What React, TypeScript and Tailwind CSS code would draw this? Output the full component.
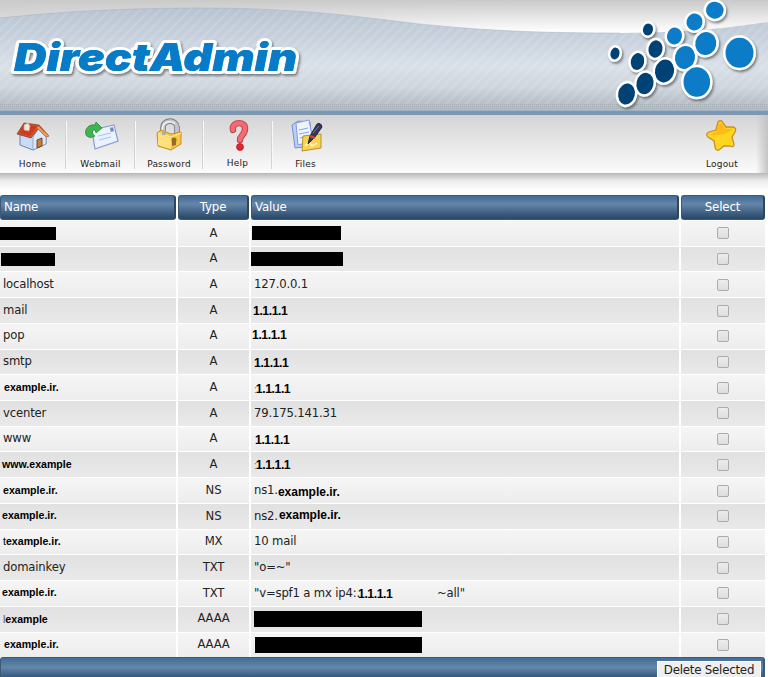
import React from "react";

type Row = {
  name: React.ReactNode;
  type: string;
  value: React.ReactNode;
};

const bold = "font-['Liberation_Sans'] font-bold text-black leading-none whitespace-pre";

function Bar({ className }: { className: string }) {
  return <span className={`block shrink-0 bg-black ${className}`} />;
}

function B({ children, className = "" }: { children: React.ReactNode; className?: string }) {
  return <span className={`${bold} ${className}`}>{children}</span>;
}

function Plain({ children, className = "" }: { children: React.ReactNode; className?: string }) {
  return <span className={`whitespace-pre tracking-[-0.17px] ${className}`}>{children}</span>;
}

const ex = "text-[10.6px] tracking-[0px]";
const ip = "text-[12.2px] tracking-[-0.4px]";

const rows: Row[] = [
  { name: <Bar className="mt-px h-[13px] w-[56px]" />, type: "A", value: <Bar className="ml-px h-[14px] w-[89px]" /> },
  { name: <Bar className="ml-px mt-px h-[13px] w-[54px]" />, type: "A", value: <Bar className="h-[14px] w-[92px]" /> },
  { name: <Plain className="pl-[3px]">localhost</Plain>, type: "A", value: <Plain className="pl-[3px]">127.0.0.1</Plain> },
  { name: <Plain className="pl-[3px]">mail</Plain>, type: "A", value: <B className={`${ip} pl-[2px] pt-px`}>1.1.1.1</B> },
  { name: <Plain className="pl-[3px]">pop</Plain>, type: "A", value: <B className={`${ip} pl-px pb-[2px]`}>1.1.1.1</B> },
  { name: <Plain className="pl-[3px]">smtp</Plain>, type: "A", value: <B className={`${ip} pl-[3px] pt-[3px]`}>1.1.1.1</B> },
  { name: <B className={`${ex} pl-[4px]`}>example.ir.</B>, type: "A", value: <B className={`${ip} pl-[3px] pt-[3px]`}><span className="text-[10px] font-normal text-[#777] tracking-[-1px]">:</span>1.1.1.1</B> },
  { name: <Plain className="pl-[3px]">vcenter</Plain>, type: "A", value: <Plain className="pl-[3px]">79.175.141.31</Plain> },
  { name: <Plain className="pl-[3px]">www</Plain>, type: "A", value: <B className={`${ip} pl-[4px] pt-px`}>1.1.1.1</B> },
  { name: <B className={`${ex} pl-[2px] tracking-[-0.15px] pb-px`}>www.example</B>, type: "A", value: <B className={`${ip} pl-[3px] pt-px`}><span className="text-[10px] font-normal text-[#777] tracking-[-1px]">:</span>1.1.1.1</B> },
  { name: <B className={`${ex} pl-[3px]`}>example.ir.</B>, type: "NS", value: <><Plain className="pl-[3px]">ns1.</Plain><B className="text-[12px] pt-[3px]">example.ir.</B></> },
  { name: <B className={`${ex} pl-[2px] pb-px`}>example.ir.</B>, type: "NS", value: <><Plain className="pl-[3px]">ns2.</Plain><B className="text-[12px] pl-px pb-[2px]">example.ir.</B></> },
  { name: <B className={`${ex} pl-[3px] pb-px`}><span className="font-normal">t</span>example.ir.</B>, type: "MX", value: <Plain className="pl-[3px]">10 mail</Plain> },
  { name: <Plain className="pl-[3px]">domainkey</Plain>, type: "TXT", value: <Plain className="pl-[3px]">"o=~"</Plain> },
  {
    name: <B className={`${ex} pl-[2px] pb-[3px]`}>example.ir.</B>,
    type: "TXT",
    value: (
      <>
        <Plain className="w-[107px] pl-[3px]">"v=spf1 a mx ip4:.</Plain>
        <B className={`${ip} w-[79px] pt-px`}>1.1.1.1</B>
        <Plain>~all"</Plain>
      </>
    ),
  },
  { name: <B className={`${ex} pl-[3px]`}><span className="font-normal text-[#555]">l</span>example</B>, type: "AAAA", value: <Bar className="ml-[3px] h-[16px] w-[168px]" /> },
  { name: <B className={`${ex} pl-[4px] pb-px`}>example.ir.</B>, type: "AAAA", value: <Bar className="ml-[4px] h-[16px] w-[167px]" /> },
];

function Banner() {
  const dots: [number, number, number, number, string][] = [
    [615, 53.5, 4.5, 6, "#054276"],
    [648, 29.5, 5, 6, "#054276"],
    [637.5, 61.5, 6.7, 8.5, "#054276"],
    [655.5, 49, 7, 8.7, "#054276"],
    [626.5, 94, 8.3, 10.7, "#054276"],
    [645, 83.5, 8.5, 10.8, "#054276"],
    [664.5, 71, 9.5, 11.5, "#054276"],
    [674.5, 36, 7.5, 8.5, "#087bc8"],
    [694.5, 22, 8, 8.5, "#087bc8"],
    [714.8, 10.2, 8.8, 8.5, "#087bc8"],
    [685, 57.5, 10, 11.5, "#087bc8"],
    [705.8, 43.5, 10.5, 11.5, "#087bc8"],
    [696.8, 82, 13.3, 14.8, "#087bc8"],
    [739.5, 52.8, 14, 15, "#087bc8"],
  ];
  return (
    <svg className="block h-[115px] w-[768px] shrink-0" viewBox="0 0 768 115">
      <defs>
        <linearGradient id="sky" x1="0" y1="0" x2="0" y2="1">
          <stop offset="0" stopColor="#cbcaca" />
          <stop offset="0.28" stopColor="#fff" />
        </linearGradient>
        <linearGradient id="skyLeft">
          <stop offset="0" stopColor="#cbcaca" stopOpacity="0.5" />
          <stop offset="1" stopColor="#cbcaca" stopOpacity="0" />
        </linearGradient>
        <linearGradient id="hill" gradientUnits="userSpaceOnUse" x1="0" y1="8" x2="0" y2="111">
          <stop offset="0" stopColor="#b6c3d1" />
          <stop offset="0.3" stopColor="#c8d2de" />
          <stop offset="0.57" stopColor="#d9e0e8" />
          <stop offset="0.78" stopColor="#cdd4dc" />
          <stop offset="0.9" stopColor="#bac1c9" />
          <stop offset="1" stopColor="#b5bcc3" />
        </linearGradient>
        <pattern id="stripe" width="10" height="10" patternUnits="userSpaceOnUse">
          <path d="M-2 12L12 -2M-2 2L2 -2M8 12L12 8" stroke="#fff" strokeWidth="2.6" opacity="0.11" />
        </pattern>
        <pattern id="mesh" width="2" height="2" patternUnits="userSpaceOnUse">
          <rect width="1" height="1" fill="#8f98a1" opacity="0.4" />
        </pattern>
        <filter id="shade" x="-20%" y="-20%" width="140%" height="150%">
          <feDropShadow dx="1.5" dy="2" stdDeviation="1.2" floodColor="#333" floodOpacity="0.55" />
        </filter>
      </defs>
      <rect width="768" height="115" fill="url(#sky)" />
      <rect width="500" height="40" fill="url(#skyLeft)" />
      <path d="M0 18C75 10 145 8 200 8C320 8 385 21 430 25C500 32 560 33 620 33C685 33 730 28 768 22V111H0Z" fill="url(#hill)" />
      <path d="M0 18C75 10 145 8 200 8C320 8 385 21 430 25C500 32 560 33 620 33C685 33 730 28 768 22V104H0Z" fill="url(#stripe)" />
      <path d="M0 18C75 10 145 8 200 8C320 8 385 21 430 25C500 32 560 33 620 33" fill="none" stroke="#a6b0bc" strokeOpacity=".5" />
      <rect y="104" width="768" height="6" fill="url(#mesh)" />
      <rect y="110" width="768" height="5" fill="#7c98b3" />
      <rect y="110" width="768" height="1" fill="#a0b2c3" />
      <text
        x="14" y="71" textLength="283" lengthAdjust="spacingAndGlyphs" filter="url(#shade)"
        fill="#087bc8" stroke="#fff" strokeWidth="6" strokeLinejoin="round" paintOrder="stroke"
        className="font-['Inter'] text-[39px] font-black italic"
      >DirectAdmin</text>
      <text
        x="14" y="71" textLength="283" lengthAdjust="spacingAndGlyphs" fill="#087bc8"
        className="font-['Inter'] text-[39px] font-black italic"
      >DirectAdmin</text>
      <g filter="url(#shade)" stroke="#fff" strokeWidth="5" paintOrder="stroke">
        {dots.map(([x, y, rx, ry, c]) => (
          <ellipse key={`${x}`} cx={x} cy={y} rx={rx} ry={ry} fill={c} transform={`rotate(${rx < 12 ? 12 : 0} ${x} ${y})`} />
        ))}
      </g>
    </svg>
  );
}

const HomeIcon = () => (
  <svg className="h-[34px] w-[36px]" viewBox="0 0 36 34">
    <path d="M5 16L19 7L31 18V26L18 32L5 27Z" fill="#c8dcf7" stroke="#7183b0" />
    <path d="M18 19L24 10L31 18V26L18 32Z" fill="#dceafe" stroke="#8292b8" strokeWidth=".7" />
    <path d="M22 22L27 20V28L22 30Z" fill="#c5803b" stroke="#744520" />
    <path d="M9 5L24 7L34 18L31 19L23 11L16 20L2 16Z" fill="#d35322" stroke="#84452d" strokeWidth=".8" />
    <path d="M9 6L22 8L15 18L4 15Z" fill="#cf3b20" />
    <path d="M23 8L34 18L31 19L22 10Z" fill="#ed9a55" />
    <path d="M9 7L13 5L15 8L14 13L9 12Z" fill="#f8e4dc" stroke="#c9a49b" strokeWidth=".6" />
  </svg>
);

const MailIcon = () => (
  <svg className="h-[34px] w-[36px]" viewBox="0 0 36 34">
    <path d="M9 12L31 7L35 23L12 31Z" fill="#eaf1ff" stroke="#8c9cd0" strokeWidth="1.2" />
    <path d="M15 18L28 15M16 22L28 19" stroke="#a8c5f1" strokeWidth="1.2" />
    <rect x="27" y="9" width="4" height="5" fill="#7187c9" stroke="#fff" strokeWidth=".6" transform="rotate(-10 29 12)" />
    <path d="M3 17C1 11 6 6 12 7L13 4L19 10L13 15L12 12C8 12 9 16 12 18C9 20 5 20 3 17Z" fill="#42b44d" stroke="#2b8c3d" strokeWidth=".8" />
  </svg>
);

const LockIcon = () => (
  <svg className="h-[34px] w-[36px]" viewBox="0 0 36 34">
    <path d="M12 18V10C12 1 25 1 26 9V15" fill="none" stroke="#777c82" strokeWidth="5.6" />
    <path d="M12 18V10C12 1 25 1 26 9V15" fill="none" stroke="#c3c7cb" strokeWidth="3.8" />
    <path d="M11.4 17V10C12 4 20 2 24 6" fill="none" stroke="#f3f4f5" strokeWidth="1.4" />
    <path d="M6 15L10 12L20 16L30 14V26L20 32L7 28Z" fill="#f4c844" stroke="#c68d22" />
    <path d="M7 16L20 20V31L7 27Z" fill="#ffe07b" />
    <path d="M7 15L20 19L30 15" fill="none" stroke="#fff1a7" />
    <path d="M13 17V13" stroke="#a8acb0" strokeWidth="3.6" />
    <circle cx="23" cy="22" r="2.5" fill="#9b691f" /><path d="M21 22H25V27L21 28Z" fill="#9b691f" />
  </svg>
);

const HelpIcon = () => (
  <svg className="h-[34px] w-[36px]" viewBox="0 0 36 34">
    <path d="M13 13C11 4 26 4 25 12C25 18 20 18 20 23" fill="none" stroke="#b93f49" strokeWidth="6.4" strokeLinecap="round" />
    <path d="M13 13C11 4 26 4 25 12C25 18 20 18 20 23" fill="none" stroke="#f26c74" strokeWidth="4.6" strokeLinecap="round" />
    <circle cx="20" cy="30" r="3.4" fill="#e7222c" stroke="#b82b38" />
  </svg>
);

const FilesIcon = () => (
  <svg className="h-[34px] w-[36px]" viewBox="0 0 36 34">
    <path d="M4 7L10 3L22 4L24 28L7 30Z" fill="#b9cff8" stroke="#758fd6" />
    <path d="M8 5L21 2L25 23L10 27Z" fill="#edf4ff" stroke="#829bdb" />
    <path d="M11 12L20 10M11 16L21 14M12 20L19 18" stroke="#86a7e6" />
    <path d="M15 18L33 16V30L14 33Z" fill="#f6d356" stroke="#b5912d" />
    <path d="M17 28L21 24L24 28L29 25" fill="none" stroke="#fff0a6" strokeWidth="2" />
    <path d="M20 26L22 18L29 6Q33 4 34 9L27 19Z" fill="#363859" stroke="#25273f" />
    <path d="M22 18L27 20" stroke="#db403d" strokeWidth="2" /><path d="M25 15L31 8" stroke="#777caa" />
  </svg>
);

const StarIcon = () => (
  <svg className="h-[34px] w-[36px]" viewBox="0 0 36 34">
    <path d="M14 4Q17 1 19 5L22 9L29 9Q33 10 31 14L28 19L30 26Q30 30 26 28L20 28L15 32Q12 33 11 29L10 23L4 19Q1 16 5 14L12 12Z" fill="#ffd51f" stroke="#c98e27" strokeWidth="1.3" />
    <path d="M14 6L18 5L21 11L29 11L21 16L12 17L6 17L13 13Z" fill="#ffad19" opacity=".7" />
  </svg>
);

function Item({ icon, label, className }: { icon: React.ReactNode; label: string; className: string }) {
  return (
    <div className={`flex shrink-0 flex-col items-center ${className}`}>
      {icon}
      <span className="mt-[6px] whitespace-pre text-[9px] leading-[12px] tracking-[0.2px] text-[#222]">{label}</span>
    </div>
  );
}

const Sep = () => <div className="mt-[3px] h-[48px] w-[2px] shrink-0 border-l border-[#d3d3d3] bg-[#f8f8f8]" />;

function Toolbar() {
  return (
    <nav className="flex h-[58px] shrink-0 bg-linear-to-b from-[#d4d4d4] to-[#fbfbfb] pt-[3px]">
      <Item icon={<HomeIcon />} label="Home" className="w-[65px]" />
      <Sep />
      <Item icon={<MailIcon />} label="Webmail" className="w-[67px]" />
      <Sep />
      <Item icon={<LockIcon />} label="Password" className="w-[66px]" />
      <Sep />
      <Item icon={<HelpIcon />} label="Help" className="-mt-px w-[67px]" />
      <Sep />
      <Item icon={<FilesIcon />} label="Files" className="w-[65px]" />
      <Item icon={<StarIcon />} label="Logout" className="ml-auto mr-px w-[66px]" />
      <div className="-mt-[3px] w-[12px] shrink-0 bg-linear-to-r from-transparent to-[#c4c4c4]" />
    </nav>
  );
}

const cols = "grid grid-cols-[176px_71px_428px_84px] gap-x-[2px]";
const blue =
  "bg-linear-to-b from-[#456f99] from-5% via-[#6486a8] via-35% to-[#2b4b6c] to-95%";

function Head({ children, center = false }: { children: React.ReactNode; center?: boolean }) {
  return (
    <div className={`flex items-center rounded-[3px] border border-[#3c5a78] border-r-2 border-r-[#32465a] pt-px text-[11.8px] tracking-[-0.15px] text-white ${blue} ${center ? "justify-center" : "pl-[3px]"}`}>
      {children}
    </div>
  );
}

export default function App() {
  return (
    <div className="flex h-[677px] w-[768px] flex-col overflow-hidden bg-white font-['DejaVu_Sans',sans-serif] text-[11.65px] text-[#222]">
      <Banner />
      <Toolbar />
      <div className="h-[22px] shrink-0 bg-linear-to-b from-[#b8b8b8] via-[#ececec] via-35% to-white to-80%" />
      <div className={`${cols} h-[25px] shrink-0`}>
        <Head>Name</Head>
        <Head center>Type</Head>
        <Head>Value</Head>
        <Head center>Select</Head>
      </div>
      <div className="flex shrink-0 flex-col">
        {rows.map((r, i) => {
          const bg = i % 2 === 0 ? "bg-linear-to-b from-[#f5f5f5] to-[#ededed]" : "bg-linear-to-b from-[#e1e1e1] to-[#e9e9e9]";
          return (
            <div key={i} className={`${cols} h-[25.72px] pt-px`}>
              <div className={`flex items-center overflow-hidden ${bg}`}>{r.name}</div>
              <div className={`flex items-center justify-center tracking-[-0.17px] ${bg}`}>{r.type}</div>
              <div className={`flex items-center overflow-hidden ${bg}`}>{r.value}</div>
              <div className={`flex items-center justify-center ${bg}`}>
                <span className="block h-[12px] w-[12px] rounded-[2px] border border-[#ababab] bg-linear-to-b from-[#ececec] to-[#dedede]" />
              </div>
            </div>
          );
        })}
      </div>
      <div className="mr-[3px] flex min-h-0 flex-1 justify-end rounded-t-[3px] border border-b-0 border-[#3c5a78] border-r-2 bg-linear-to-b from-[#456f99] from-5% via-[#6486a8] via-50% to-[#35597f] pr-[2px] pt-[3px]">
        <button className="flex w-[104px] items-center justify-center border border-b-0 border-white bg-[#efefef] whitespace-nowrap text-[11.8px] leading-[14px] tracking-[-0.22px] text-[#222]">Delete Selected</button>
      </div>
    </div>
  );
}
